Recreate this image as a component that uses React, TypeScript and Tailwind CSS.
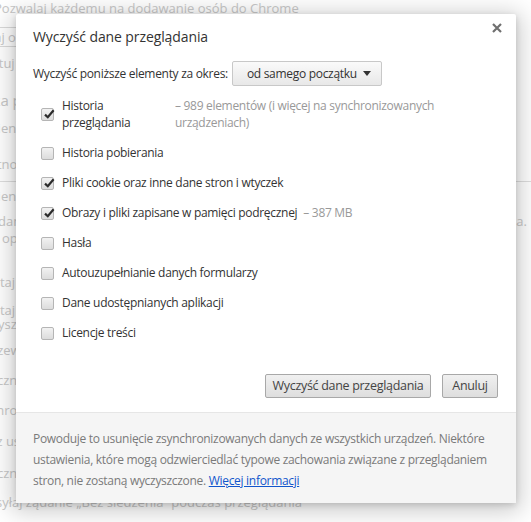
import React from "react";

const FONT = { fontFamily: '"Open Sans", "Noto Sans", sans-serif' };

type Item = { label: string; note?: string; checked: boolean; wide?: boolean };

const ITEMS: Item[] = [
  { label: "Historia przeglądania", note: "– 989 elementów (i więcej na synchronizowanych urządzeniach)", checked: true, wide: true },
  { label: "Historia pobierania", checked: false },
  { label: "Pliki cookie oraz inne dane stron i wtyczek", checked: true },
  { label: "Obrazy i pliki zapisane w pamięci podręcznej", note: "– 387 MB", checked: true },
  { label: "Hasła", checked: false },
  { label: "Autouzupełnianie danych formularzy", checked: false },
  { label: "Dane udostępnianych aplikacji", checked: false },
  { label: "Licencje treści", checked: false },
];

function Checkbox({ checked }: { checked: boolean }) {
  return (
    <span className="relative inline-block w-[13px] h-[13px] shrink-0 rounded-[2px] border border-[#b5b5b5] bg-gradient-to-b from-[#f2f2f2] to-[#dcdcdc]">
      {checked && (
        <svg className="absolute left-[1px] top-[-1px]" width="12" height="12" viewBox="0 0 12 12">
          <path d="M2 6.6 L4.8 9.2 L10.6 2.2" fill="none" stroke="#2b2b2b" strokeWidth="2.2" />
        </svg>
      )}
    </span>
  );
}

function BackgroundPage() {
  return (
    <div className="text-[13px] leading-[17px] text-[#c8c8c8] whitespace-nowrap overflow-hidden h-[522px] w-[531px]">
      <div className="ml-[-6px]">Pozwalaj każdemu na dodawanie osób do Chrome</div>
      <div className="mt-[10px] ml-[-40px] w-[120px] h-[20px] border border-[#dadada] rounded-[2px] px-2 leading-[18px]">Dodaj osobę…</div>
      <div className="mt-[8px] ml-[-38px]">Importuj zakładki</div>
      <div className="mt-[20px] ml-[-90px] text-[15px]">Wyszukiwarka przeglądarka</div>
      <div className="mt-[11px] ml-[-40px]">Ustawienie domyślne</div>
      <div className="mt-[19px] ml-[-40px]">Prywatność</div>
      <div className="mt-[8px] border-t border-[#dedede] pt-[6px] ml-[-40px] h-[28px]">Ustawienia treści</div>
      <div className="mt-[4px] flex justify-between pr-[4px]">
        <span className="ml-[-2px]">dane przeglądarki i usług sieciowych jest możliwe</span>
        <span>a.</span>
      </div>
      <div className="ml-[-6px]">t opcjonalnie wyłączyć</div>
      <div className="mt-[28px] ml-[-40px] leading-[14px]">Korzystaj z usługi internetowej</div>
      <div className="mt-[14px] ml-[-40px] leading-[14px]">Korzystaj z podpowiedzi</div>
      <div className="ml-[-12px] leading-[14px]">wyszukiwania</div>
      <div className="mt-[11px] ml-[-16px]">Przewiduj działania sieciowe</div>
      <div className="mt-[13px] ml-[-62px]">Automatycznie wysyłaj</div>
      <div className="mt-[13px] ml-[-56px]">Włącz ochronę</div>
      <div className="mt-[14px] ml-[-62px]">Korzystaj z usługi</div>
      <div className="mt-[15px] ml-[-62px]">Automatycznie wysyłaj statystyki</div>
      <div className="mt-[12px] ml-[-4px]">syłaj żądanie „Bez śledzenia” podczas przeglądania</div>
    </div>
  );
}

export default function App() {
  return (
    <div className="relative w-[531px] h-[522px] bg-white overflow-hidden" style={FONT}>
      <BackgroundPage />

      <div className="absolute left-[16px] top-[14px] w-[500px] bg-white rounded-[2px] shadow-[0_4px_23px_5px_rgba(0,0,0,0.2),0_2px_6px_rgba(0,0,0,0.15)] text-[12px] tracking-[-0.3px] text-[#333]">
        <div className="flex items-start justify-between pl-[17px] pr-[14px] pt-[13px]">
          <h1 className="text-[14px] tracking-[-0.1px] leading-[20px] text-[#333]">Wyczyść dane przeglądania</h1>
          <svg className="mt-[-4px]" width="10" height="10" viewBox="0 0 10 10">
            <path d="M1 1 L9 9 M9 1 L1 9" stroke="#6f6f6f" strokeWidth="2.2" />
          </svg>
        </div>

        <div className="flex items-center gap-[4px] pl-[17px] mt-[14px] h-[25px]">
          <span>Wyczyść poniższe elementy za okres:</span>
          <div className="flex items-center justify-between w-[150px] h-[25px] pl-[14px] pr-[10px] border border-[#c8c8c8] rounded-[2px] bg-gradient-to-b from-[#fafafa] to-[#e8e8e8] text-[12px] text-[#333]">
            <span className="whitespace-nowrap">od samego początku</span>
            <svg width="8" height="5" viewBox="0 0 8 5">
              <path d="M0 0 H8 L4 5 Z" fill="#333" />
            </svg>
          </div>
        </div>

        <div className="mt-[11px] pl-[25px]">
          {ITEMS.map((it, i) =>
            it.wide ? (
              <div key={i} className="flex items-center h-[34px] mb-[7px]">
                <Checkbox checked={it.checked} />
                <span className="ml-[8px] w-[113px] pr-[20px] leading-[17px]">{it.label}</span>
                <span className="w-[290px] leading-[17px] text-[#999]">{it.note}</span>
              </div>
            ) : (
              <div key={i} className="flex items-center h-[30px]">
                <Checkbox checked={it.checked} />
                <span className="ml-[8px]">{it.label}</span>
                {it.note && <span className="ml-[6px] text-[#999]">{it.note}</span>}
              </div>
            ),
          )}
        </div>

        <div className="flex justify-end gap-[11px] pr-[18px] mt-[26px]">
          <button className="h-[24px] w-[166px] whitespace-nowrap border border-[#a8a8a8] rounded-[2px] bg-gradient-to-b from-[#f0f0f0] to-[#dedede] text-[12.5px] text-[#444]">
            Wyczyść dane przeglądania
          </button>
          <button className="h-[24px] w-[56px] border border-[#a8a8a8] rounded-[2px] bg-gradient-to-b from-[#f0f0f0] to-[#dedede] text-[12.5px] text-[#444]">
            Anuluj
          </button>
        </div>

        <div className="mt-[14px] border-t border-[#e6e6e6] bg-[#f5f5f5] pl-[17px] pr-[14px] pt-[15px] pb-[12px] leading-[21px] text-[#7a7a7a]">
          Powoduje to usunięcie zsynchronizowanych danych ze wszystkich urządzeń. Niektóre ustawienia, które mogą
          odzwierciedlać typowe zachowania związane z przeglądaniem stron, nie zostaną wyczyszczone.{" "}
          <a className="text-[#15c] underline">Więcej informacji</a>
        </div>
      </div>
    </div>
  );
}
